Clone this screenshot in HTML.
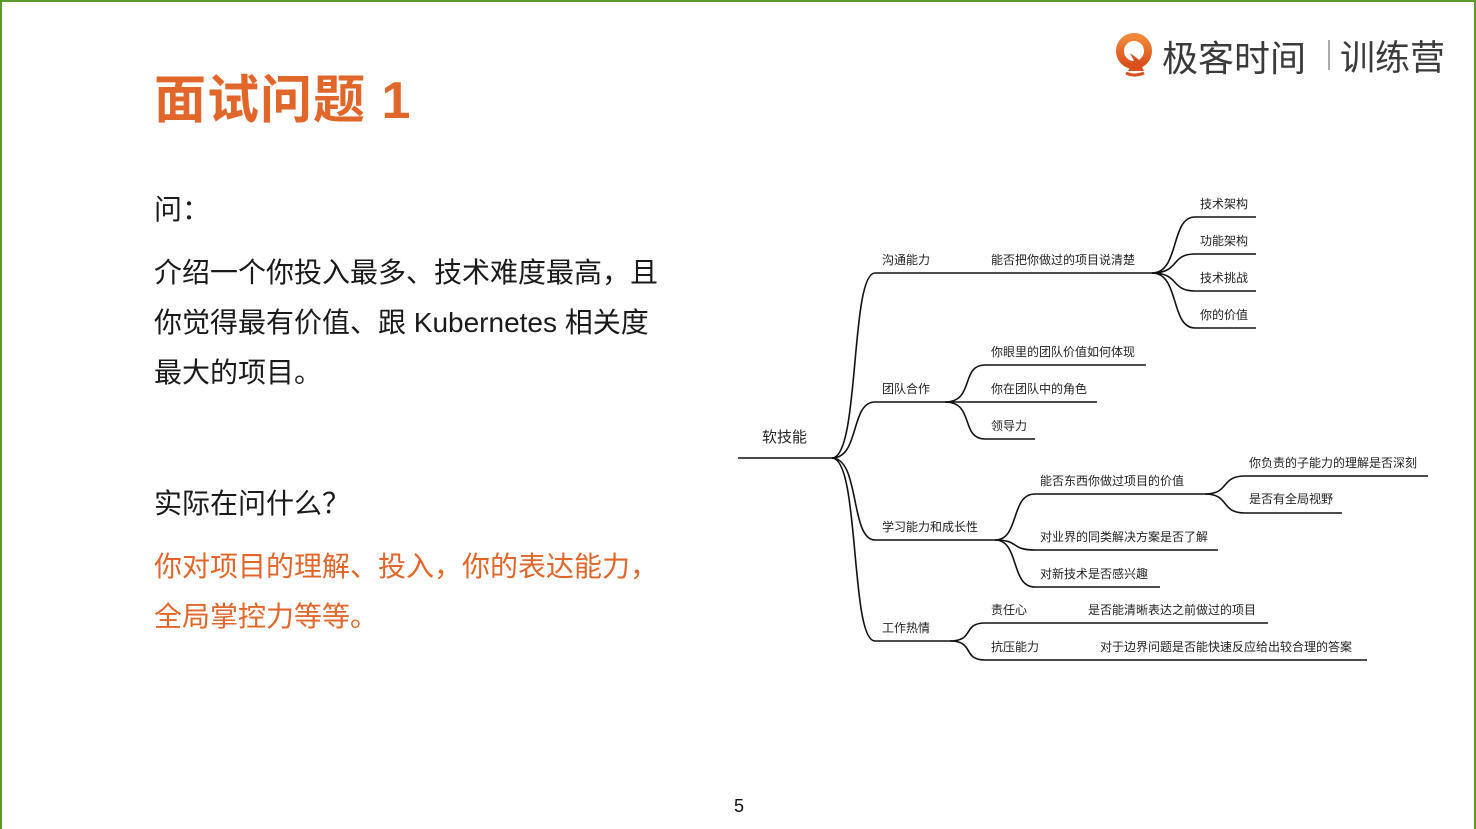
<!DOCTYPE html>
<html><head><meta charset="utf-8"><style>
html,body{margin:0;padding:0}
body{width:1476px;height:827px;position:relative;overflow:hidden;background:#fff;font-family:"Liberation Sans","Noto Sans CJK SC",sans-serif}
.frame{position:absolute;left:0;top:0;width:1472px;height:827px;border-left:2px solid #5a9a2a;border-top:2px solid #5a9a2a;border-right:2px solid #5a9a2a}
.t{position:absolute;white-space:nowrap}
</style></head><body>
<div class="frame"></div>
<div class="t" style="left:154px;top:58px;font-size:52px;font-weight:bold;color:#e0662a;letter-spacing:1px">面试问题 1</div>
<svg style="position:absolute;left:1114px;top:31px" width="42" height="48" viewBox="0 0 42 48">
<defs><linearGradient id="g" x1="0" y1="0" x2="0" y2="1"><stop offset="0" stop-color="#f0883a"/><stop offset="1" stop-color="#d9501c"/></linearGradient></defs>
<circle cx="20" cy="20" r="14" fill="none" stroke="url(#g)" stroke-width="8"/>
<path d="M16 22 L20 30 L14 40 L30 40 L24 28 Z" fill="#d9501c"/>
<path d="M12 42 Q20 46 30 42" stroke="#d9501c" stroke-width="3" fill="none"/>
</svg>
<div class="t" style="left:1162px;top:30px;font-size:36px;color:#3a3a3a">极客时间</div>
<div style="position:absolute;left:1328px;top:40px;width:2px;height:30px;background:#aaa"></div>
<div class="t" style="left:1340px;top:30px;font-size:35px;color:#3a3a3a">训练营</div>
<div class="t" style="left:154px;top:188px;font-size:28px;color:#1a1a1a">问：</div>
<div class="t" style="left:154px;top:248px;font-size:28px;color:#1a1a1a;line-height:50px">介绍一个你投入最多、技术难度最高，且<br>你觉得最有价值、跟 Kubernetes 相关度<br>最大的项目。</div>
<div class="t" style="left:154px;top:482px;font-size:28px;color:#1a1a1a">实际在问什么？</div>
<div class="t" style="left:154px;top:542px;font-size:28px;color:#e0662a;line-height:50px">你对项目的理解、投入，你的表达能力，<br>全局掌控力等等。</div>
<div class="t" style="left:734px;top:796px;font-size:18px;color:#111">5</div>
<svg style="position:absolute;left:0;top:0" width="1476" height="827" viewBox="0 0 1476 827" font-family="Liberation Sans,Noto Sans CJK SC,sans-serif" font-size="12" fill="#222">
<g stroke="#111" stroke-width="1.6" fill="none">
<path d="M738 458 H832"/>
<path d="M832 458 C860 458 850 273 875 273 H1152"/>
<path d="M832 458 C860 458 850 402 875 402 H945"/>
<path d="M832 458 C860 458 850 540 875 540 H995"/>
<path d="M832 458 C860 458 850 641 875 641 H950"/>
<path d="M1152 273 C1180 273 1170 217 1195 217 H1256"/>
<path d="M1152 273 C1180 273 1170 254 1195 254 H1256"/>
<path d="M1152 273 C1180 273 1170 291 1195 291 H1256"/>
<path d="M1152 273 C1180 273 1170 328 1195 328 H1256"/>
<path d="M945 402 C975 402 960 365 985 365 H1146"/>
<path d="M945 402 H1097"/>
<path d="M945 402 C975 402 960 439 985 439 H1035"/>
<path d="M995 540 C1020 540 1010 494 1035 494 H1205"/>
<path d="M995 540 C1020 540 1010 550 1035 550 H1218"/>
<path d="M995 540 C1020 540 1010 587 1035 587 H1160"/>
<path d="M1205 494 C1230 494 1220 476 1245 476 H1428"/>
<path d="M1205 494 C1230 494 1220 513 1245 513 H1342"/>
<path d="M950 641 C975 641 962 623 985 623 H1268"/>
<path d="M950 641 C975 641 962 660 985 660 H1367"/>
</g>
<text x="762" y="442" font-size="15">软技能</text>
<text x="882" y="264">沟通能力</text>
<text x="991" y="264">能否把你做过的项目说清楚</text>
<text x="1200" y="208">技术架构</text>
<text x="1200" y="245">功能架构</text>
<text x="1200" y="282">技术挑战</text>
<text x="1200" y="319">你的价值</text>
<text x="882" y="393">团队合作</text>
<text x="991" y="356">你眼里的团队价值如何体现</text>
<text x="991" y="393">你在团队中的角色</text>
<text x="991" y="430">领导力</text>
<text x="882" y="531">学习能力和成长性</text>
<text x="1040" y="485">能否东西你做过项目的价值</text>
<text x="1249" y="467">你负责的子能力的理解是否深刻</text>
<text x="1249" y="503">是否有全局视野</text>
<text x="1040" y="541">对业界的同类解决方案是否了解</text>
<text x="1040" y="578">对新技术是否感兴趣</text>
<text x="882" y="632">工作热情</text>
<text x="991" y="614">责任心</text>
<text x="1088" y="614">是否能清晰表达之前做过的项目</text>
<text x="991" y="651">抗压能力</text>
<text x="1100" y="651">对于边界问题是否能快速反应给出较合理的答案</text>
</svg>
</body></html>
